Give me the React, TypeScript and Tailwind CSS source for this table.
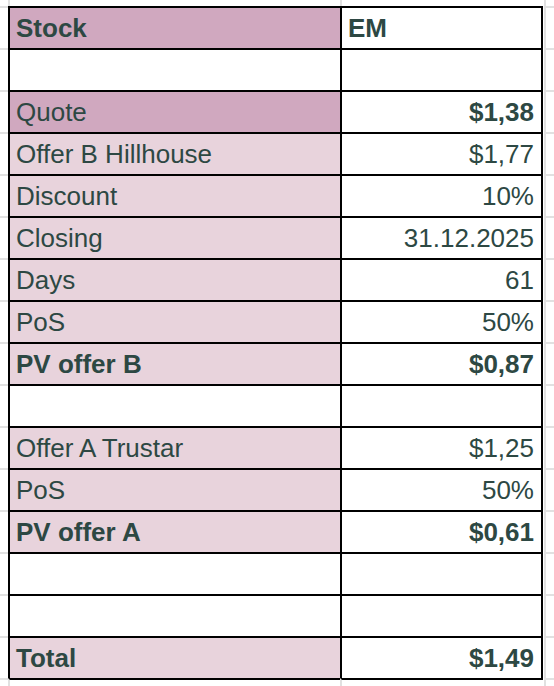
import React from 'react';

type Row = {
  label: string;
  value: string;
  fill: 'dark' | 'light' | 'none';
  boldLabel?: boolean;
  boldValue?: boolean;
  valueLeft?: boolean;
};

const rows: Row[] = [
  { label: 'Stock', value: 'EM', fill: 'dark', boldLabel: true, boldValue: true, valueLeft: true },
  { label: '', value: '', fill: 'none' },
  { label: 'Quote', value: '$1,38', fill: 'dark', boldValue: true },
  { label: 'Offer B Hillhouse', value: '$1,77', fill: 'light' },
  { label: 'Discount', value: '10%', fill: 'light' },
  { label: 'Closing', value: '31.12.2025', fill: 'light' },
  { label: 'Days', value: '61', fill: 'light' },
  { label: 'PoS', value: '50%', fill: 'light' },
  { label: 'PV offer B', value: '$0,87', fill: 'light', boldLabel: true, boldValue: true },
  { label: '', value: '', fill: 'none' },
  { label: 'Offer A Trustar', value: '$1,25', fill: 'light' },
  { label: 'PoS', value: '50%', fill: 'light' },
  { label: 'PV offer A', value: '$0,61', fill: 'light', boldLabel: true, boldValue: true },
  { label: '', value: '', fill: 'none' },
  { label: '', value: '', fill: 'none' },
  { label: 'Total', value: '$1,49', fill: 'light', boldLabel: true, boldValue: true },
];

function fillClass(fill: Row['fill']): string {
  if (fill === 'dark') return 'bg-[#d0a8bf]';
  if (fill === 'light') return 'bg-[#e8d3dc]';
  return 'bg-white';
}

const App: React.FC = () => {
  return (
    <div
      className="grid h-[686px] w-[554px] grid-cols-[8px_332px_203px_11px] grid-rows-[6px_repeat(16,42px)_8px] overflow-hidden bg-white text-[26px] text-[#2d4843]"
      style={{ fontFamily: '"Liberation Sans", Arial, sans-serif' }}
    >
      {/* sheet row above the table */}
      <div />
      <div className="border-l-2 border-[#e1e1e1]" />
      <div className="border-l-2 border-[#e1e1e1]" />
      <div className="ml-px border-l-2 border-[#e1e1e1]" />

      {rows.map((row, index) => (
        <React.Fragment key={index}>
          <div className="border-t-2 border-[#e1e1e1]" />
          <div className={`flex items-center border-l-2 border-t-2 border-black pl-[6px] ${fillClass(row.fill)} ${row.boldLabel ? 'font-bold' : ''}`}>
            {row.label}
          </div>
          <div
            className={`flex items-center border-l-2 border-r-2 border-t-2 border-black bg-white ${row.valueLeft ? 'justify-start pl-[6px]' : 'justify-end pr-[7px]'} ${row.boldValue ? 'font-bold' : ''}`}
          >
            {row.value}
          </div>
          <div className="ml-px border-l-2 border-t-2 border-[#e1e1e1]" />
        </React.Fragment>
      ))}

      {/* sheet row below the table */}
      <div className="border-t-2 border-[#e1e1e1]" />
      <div className="border-l-2 border-t-2 border-l-[#e1e1e1] border-t-black" />
      <div className="border-l-2 border-t-2 border-l-[#e1e1e1] border-t-black" />
      <div className="ml-px border-l-2 border-t-2 border-[#e1e1e1]" />
    </div>
  );
};

export default App;
